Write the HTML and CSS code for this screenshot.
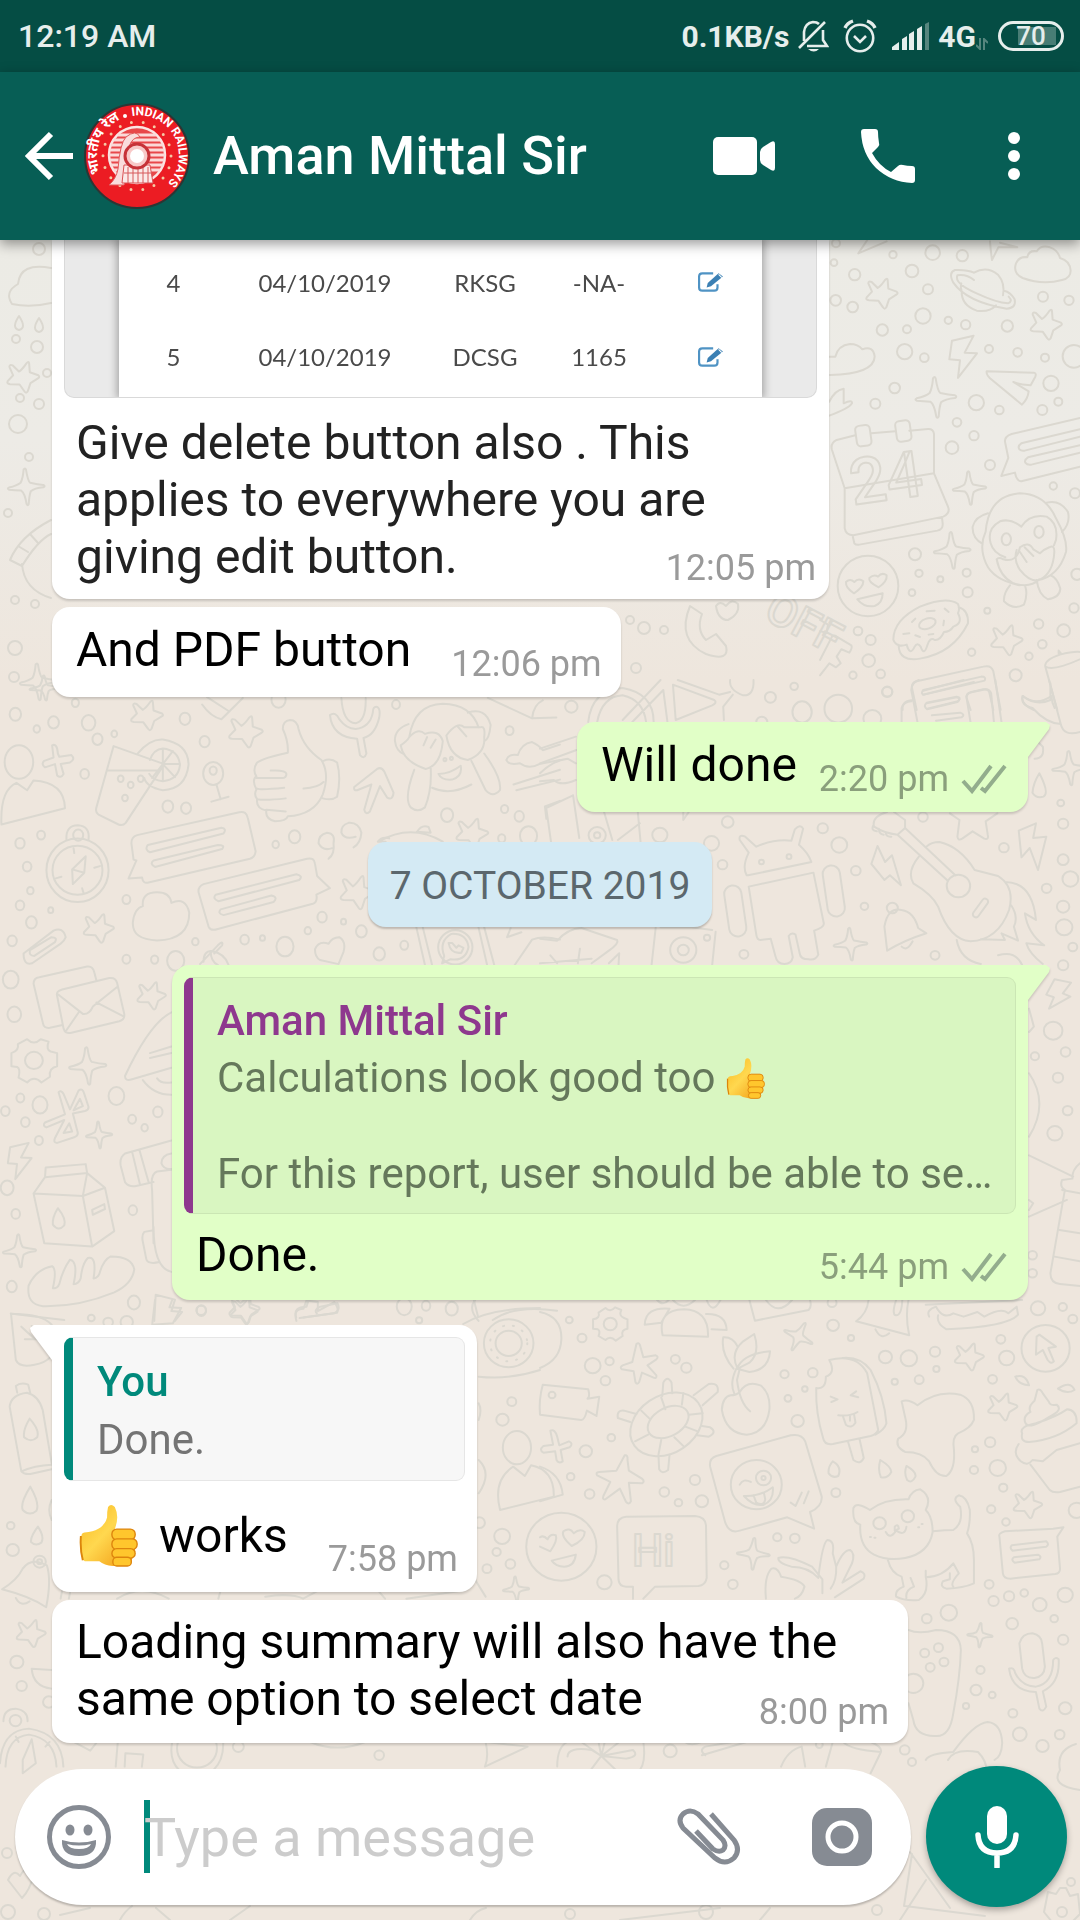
FILE: index.html
```
<!DOCTYPE html>
<html lang="en">
<head>
<meta charset="utf-8">
<meta name="viewport" content="width=device-width, initial-scale=1">
<title>Aman Mittal Sir</title>
<link rel="stylesheet" href="styles.css">
</head>
<body>
<svg class="defs" aria-hidden="true">
  <defs>
    <symbol id="ticks" viewBox="0 0 46 30">
      <path d="M2 17 L11 27 L30 2 M20 24 L24 27 L44 2" fill="none" stroke="#93ad8d" stroke-width="4"/>
    </symbol>
    <symbol id="edit" viewBox="0 0 24 20">
      <path d="M14 2H4Q1 2 1 5V15Q1 18 4 18H15Q18 18 18 15V12" fill="none" stroke="#4f93c4" stroke-width="2"/>
      <path d="M8 15l1-4L19 2l4 3L12 14z" fill="#3c80b4"/>
      <path d="M19 3l3 3" stroke="#fff" stroke-width="1"/>
    </symbol>
    <linearGradient id="skin" x1="0" y1="0" x2="1" y2="1">
      <stop offset="0" stop-color="#f9b71e"/><stop offset=".45" stop-color="#ffd84f"/><stop offset="1" stop-color="#f0930c"/>
    </linearGradient>
    <symbol id="thumb" viewBox="0 0 60 66">
      <path d="M2 32Q4 30 9 30Q25 27 28 15Q28 8 29 4Q32 0 36 4Q41 14 36 27L53 27Q58 30 56 36Q61 41 56 46Q59 51 54 56Q54 64 46 65H34Q25 64 20 60L5 60Q1 58 1 48Q0 38 2 32Z" fill="url(#skin)"/>
      <g fill="#ffc62d" stroke="#dd840d" stroke-width="1.4">
        <rect x="33" y="27" width="24" height="11" rx="5"/>
        <rect x="33" y="37" width="26" height="11" rx="5"/>
        <rect x="33" y="47" width="24" height="10" rx="5"/>
        <rect x="34" y="56" width="19" height="9" rx="4"/>
      </g>
      <path d="M1 34Q0 48 3 59" fill="none" stroke="#dc850b" stroke-width="2"/>
    </symbol>
    <g class="doodles">
      <path id="star" d="M-12 -16 Q-2 -22 10 -40 Q17 -48 18 -40 L20 -14 L45 -5 Q51 0 44 4 L22 18 L14 42 Q9 50 4 42 L-10 22 L-38 21 Q-49 20 -45 12 L-29 -5 L-40 -30 Q-40 -38 -30 -34Z"/>
      <path id="spark" d="M-8 -58 Q-3 -66 0 -58 Q6 -20 14 -14 Q40 -8 58 -7 Q66 -3 58 1 Q28 4 16 14 Q11 28 9 57 Q6 64 2 57 Q-4 20 -16 12 Q-36 10 -57 9 Q-64 5 -57 2 Q-30 -4 -18 -14 Q-10 -30 -8 -58Z"/>
      <path id="bolt" d="M-32 -45L33 -60L6 -9L43 -7L-14 67L-8 14L-40 11Z"/>
      <path id="cloud" d="M-60 34Q-90 20 -80 -10Q-70 -32 -46 -28Q-42 -50 -18 -46Q-5 -66 22 -58Q46 -50 52 -26Q82 -18 84 12Q84 34 58 40Q0 56 -60 34Z"/>
    </g>
  </defs>
</svg>

<div class="status-bar">
  <span class="clock">12:19 AM</span>
  <div class="status-icons">
    <span class="rate">0.1KB/s</span>
    <svg width="32" height="34" viewBox="0 0 32 34" fill="none" stroke="#e6eeec" stroke-width="2.6"><path d="M2 29L28 3M7 22V13Q8 4 16 3Q20 3 22 5M26 11V21L30 27H10"/><path d="M11 30h11q-5 5-11 0z" fill="#e6eeec" stroke="none"/></svg>
    <svg width="34" height="34" viewBox="0 0 34 34" fill="none" stroke="#e6eeec" stroke-width="2.6"><circle cx="17" cy="19" r="13.2"/><path d="M11 17l6 6 6-6"/><path d="M2 9Q4 4 10 2M32 9Q30 4 24 2" stroke-width="3.4"/></svg>
    <svg class="signal" width="40" height="28" viewBox="0 0 40 28" fill="#e6eeec"><path d="M1 28v-3l7-5v8zM11 28V17l5-3v14zM18 28V12l5-3v19zM26 28V7l5-3v24z"/><path d="M34 28V2l4-2v28z" fill="#56867e"/></svg>
    <span class="network">4G</span>
    <svg class="data" width="12" height="12" viewBox="0 0 12 12" fill="none" stroke="#56867e" stroke-width="2"><path d="M4 0v11L0 7M8 12V1l4 4"/></svg>
    <span class="battery">70</span>
  </div>
</div>

<header class="app-bar">
  <button class="icon-button back" aria-label="Back"><svg width="50" height="50" viewBox="0 0 50 50" fill="none" stroke="#fff" stroke-width="6"><path d="M49 25H6M27 3L5 25L27 47"/></svg></button>
  <svg class="avatar" width="106" height="106" viewBox="0 0 106 106" role="img" aria-label="Indian Railways">
    <circle cx="53" cy="53" r="52" fill="#ec1c23" stroke="#2c3635" stroke-width="2"/>
    <circle cx="53" cy="53" r="34" fill="none" stroke="#f5c9a4" stroke-width="3" stroke-linecap="round" stroke-dasharray="0 11.87"/>
    <circle cx="53" cy="52" r="28" fill="#e8474a" stroke="#fbe5e3" stroke-width="2.5"/>
    <path d="M34 32H72M30 37H76M27 42H79M26 47H80M25 52H81M26 57H80M27 62H79M30 67H76" stroke="#fbd9d8" stroke-width="3"/>
    <path d="M42 34Q52 26 56 34Q48 34 45 44Q43 58 45 70L40 82H25Q32 76 34 66Q36 40 42 34Z" fill="#f9dcdc" stroke="#e0585a"/>
    <path d="M40 62H66L69 80H38Z" fill="#fbe9e8" stroke="#d95154"/>
    <path d="M44 64V80M49 64V80M54 64V80M59 64V80M64 64V80M40 70H67" stroke="#d6585b"/>
    <circle cx="53" cy="53" r="12" fill="#f8c9c8" stroke="#c63238" stroke-width="3"/><circle cx="53" cy="53" r="7" fill="#fff"/>
    <path id="ring-right" d="M48 13A40 40 0 0 1 75 87" fill="none"/>
    <path id="ring-left" d="M17 70A40 40 0 0 1 48 13" fill="none"/>
    <text class="seal-en"><textPath href="#ring-right">INDIAN RAILWAYS</textPath></text>
    <text class="seal-hi"><textPath href="#ring-left">भारतीय रेल</textPath></text>
    <circle cx="41" cy="13" r="2" fill="#fff"/>
  </svg>
  <h1 class="title">Aman Mittal Sir</h1>
  <button class="icon-button" aria-label="Video call"><svg width="62" height="38" viewBox="0 0 62 38" fill="#fff"><rect width="44" height="38" rx="5"/><path d="M47 15Q47 12 50 10L58 5Q62 3 62 7V31Q62 35 58 33L50 28Q47 26 47 23z"/></svg></button>
  <button class="icon-button call" aria-label="Call"><svg width="54" height="54" viewBox="0 0 54 54" fill="#fff"><path d="M3 0H14Q17 0 17 3Q17 8 18 14Q19 16 17 18L11 24Q18 37 30 43L37 37Q39 35 42 36Q46 37 51 37Q54 37 54 40V51Q54 54 51 54Q30 53 15 39Q1 25 0 3Q0 0 3 0Z"/></svg></button>
  <button class="icon-button more" aria-label="More options"><svg width="12" height="48" viewBox="0 0 12 48" fill="#fff"><circle cx="6" cy="6" r="6"/><circle cx="6" cy="24" r="6"/><circle cx="6" cy="42" r="6"/></svg></button>
</header>

<main class="chat">
  <svg class="wallpaper" viewBox="0 240 1080 1680" preserveAspectRatio="xMidYMin slice" aria-hidden="true">
    <!-- right edge, upper part -->
    <g transform="translate(820 230) scale(.3333)">
      <circle cx="48" cy="40" r="12"/><circle cx="42" cy="98" r="10"/><circle cx="219" cy="74" r="11"/><circle cx="338" cy="68" r="22"/><circle cx="427" cy="77" r="17"/><circle cx="104" cy="134" r="17"/><circle cx="276" cy="123" r="19"/><circle cx="324" cy="178" r="15"/><circle cx="47" cy="211" r="16"/><circle cx="98" cy="231" r="16"/><circle cx="309" cy="258" r="23"/><circle cx="385" cy="271" r="11"/><circle cx="437" cy="284" r="14"/><circle cx="562" cy="288" r="17"/><circle cx="669" cy="200" r="15"/><circle cx="747" cy="211" r="14"/><circle cx="187" cy="300" r="17"/><circle cx="261" cy="298" r="12"/><circle cx="254" cy="365" r="23"/><circle cx="313" cy="383" r="13"/><circle cx="507" cy="357" r="12"/><circle cx="593" cy="367" r="13"/><circle cx="675" cy="383" r="12"/><circle cx="762" cy="379" r="34"/><circle cx="693" cy="460" r="23"/><circle cx="715" cy="515" r="12"/><circle cx="667" cy="540" r="15"/><circle cx="538" cy="540" r="13"/><circle cx="469" cy="518" r="23"/><circle cx="224" cy="474" r="16"/><circle cx="166" cy="521" r="15"/><circle cx="411" cy="577" r="13"/><circle cx="462" cy="617" r="14"/><circle cx="396" cy="653" r="19"/><circle cx="510" cy="705" r="15"/><circle cx="700" cy="768" r="11"/><circle cx="765" cy="790" r="15"/><circle cx="285" cy="973" r="18"/><circle cx="297" cy="1030" r="11"/><circle cx="440" cy="1028" r="12"/><circle cx="361" cy="1048" r="9"/><circle cx="276" cy="1088" r="10"/><circle cx="443" cy="1087" r="15"/><circle cx="502" cy="1142" r="9"/><circle cx="771" cy="1033" r="17"/><circle cx="762" cy="1134" r="14"/><circle cx="656" cy="1182" r="14"/><circle cx="731" cy="1202" r="19"/><circle cx="667" cy="1243" r="13"/><circle cx="627" cy="1279" r="11"/><circle cx="587" cy="1336" r="18"/><circle cx="455" cy="1267" r="11"/><circle cx="114" cy="1203" r="13"/><circle cx="152" cy="1230" r="15"/><circle cx="146" cy="1292" r="19"/><circle cx="182" cy="1332" r="13"/><circle cx="99" cy="1336" r="11"/><circle cx="202" cy="1385" r="15"/>
      <use href="#star" x="185" y="190"/><use href="#star" x="678" y="283"/><use href="#star" x="560" y="1230"/>
      <use href="#spark" x="347" y="503"/><use href="#spark" transform="translate(448 775) scale(.82)"/><use href="#spark" transform="translate(396 962) scale(.9)"/>
      <use href="#bolt" x="428" y="377"/>
      <use href="#cloud" x="668" y="110"/>
      <path d="M28 380H46Q54 346 90 342Q114 342 127 358Q160 346 164 380Q162 432 30 435M28 515Q44 480 71 476V520Q98 508 96 520Q86 536 28 557"/>
      <path d="M115 70L200 34M115 70L142 30M516 90L535 52L592 52L540 38M516 90Q512 60 510 34"/>
      <path d="M462 128Q500 106 534 134Q556 160 549 196M425 184Q424 226 470 242Q508 248 528 226M462 128Q440 118 405 120Q384 128 400 158Q440 216 560 236Q590 234 584 208Q572 186 552 182M462 150Q440 132 412 136Q402 160 470 190Q530 218 564 220Q580 214 566 200M425 184Q420 172 424 160"/>
      <path d="M500 424L642 428Q650 430 646 440L632 466Q600 464 580 456L626 484Q624 506 606 524L510 445Q498 432 500 424Z"/>
      <path d="M106 616L50 630Q30 640 36 660L74 775L342 730V612Q340 596 324 597L268 602M154 610L226 604M74 775V895Q78 916 100 916L370 860Q392 850 384 830L342 730M98 918L103 940Q108 946 118 944L352 902Q370 898 368 880L366 862"/>
      <rect x="108" y="586" width="44" height="62" rx="12" transform="rotate(-8 130 617)"/><rect x="228" y="572" width="44" height="62" rx="12" transform="rotate(-8 250 603)"/>
      <path d="M780 564L575 612Q550 620 556 640L565 684L544 738L585 728Q590 754 604 754L780 710M780 598L604 640Q592 648 598 658Q604 664 614 662L780 620M780 646L624 682Q612 690 616 698Q622 706 634 704L780 668"/>
      <path d="M497 905Q506 796 600 790Q676 792 708 865Q744 930 738 966Q716 1040 650 1052M497 905Q476 950 498 1000Q520 1050 600 1066M604 890Q572 864 540 874Q500 896 512 940Q520 970 556 982M604 890Q630 850 680 860Q716 880 708 930L702 946M680 818Q720 808 744 846Q752 880 726 906M504 850Q466 860 458 890Q456 924 488 942M530 988Q536 980 550 988Q590 1000 600 952Q626 932 640 958L660 970Q672 958 688 952Q704 944 703 966Q700 1030 658 1050Q630 1058 600 1020Q580 990 590 960M530 988Q540 1040 580 1060Q630 1076 658 1048M600 966L620 996M614 952L640 978M570 1066Q550 1090 552 1114Q580 1142 612 1124Q624 1094 616 1070M650 1050Q656 1096 684 1108Q720 1102 721 1076Q712 1044 692 1036"/>
      <ellipse cx="559" cy="928" rx="14" ry="18"/><ellipse cx="657" cy="906" rx="14" ry="18"/>
      <circle cx="144" cy="1068" r="91"/><path d="M102 1090Q76 1074 78 1056Q90 1044 103 1056Q116 1042 130 1054Q130 1072 102 1090ZM176 1072Q144 1056 148 1044Q162 1032 174 1040Q186 1026 200 1036Q202 1054 176 1072ZM112 1108L188 1090Q188 1120 164 1128Q134 1134 112 1108Z"/>
      <path d="M220 1230Q220 1170 300 1130Q380 1098 414 1122Q420 1138 414 1150Q430 1180 400 1190Q390 1206 372 1206Q360 1232 344 1230Q330 1220 322 1246Q312 1280 302 1250Q292 1236 284 1250Q270 1280 260 1244Q230 1254 220 1230ZM236 1244Q236 1296 300 1286Q400 1270 444 1180Q446 1140 416 1132M320 1144L344 1142M374 1136L386 1146M276 1176L286 1166M372 1172L370 1186M326 1214L340 1212M286 1216L300 1221M250 1212L268 1210"/><ellipse cx="322" cy="1181" rx="26" ry="15" transform="rotate(-20 322 1181)"/>
      <path d="M290 1440L276 1374Q274 1358 290 1354L490 1310Q514 1304 520 1324L542 1440M310 1380L484 1340Q500 1340 494 1352L312 1394Q300 1392 310 1380ZM320 1418L410 1400Q426 1402 414 1414L322 1436M452 1440L440 1404Q438 1390 454 1386L490 1378Q506 1376 508 1388L520 1440M284 1410Q244 1410 248 1440"/>
      <path d="M676 1310Q672 1290 720 1274Q760 1264 780 1266M676 1310Q700 1324 780 1288M676 1310L712 1440M716 1270V1262L724 1272M608 1398Q650 1430 694 1398Q696 1420 704 1434M608 1398Q600 1420 640 1440"/>
      <path d="M0 1290L36 1220Q42 1214 50 1220L94 1246Q98 1254 88 1268L64 1258L50 1280L62 1300L48 1312L28 1300L0 1336M0 1170L24 1184L20 1208L0 1204"/>
    </g>
    <text class="doodle-text" x="853" y="505" transform="rotate(-8 853 505)" font-size="64">24</text>
    <text class="doodle-text" x="762" y="618" transform="rotate(28 762 618)" font-size="44">OFF</text>
    <!-- left edge, upper part -->
    <g>
      <path d="M51 268Q20 262 18 284Q4 292 12 304Q30 308 51 303M19 316q-8 12 0 14q8-2 0-14zM39 318q-8 12 0 14q8-2 0-14z"/>
      <circle cx="39" cy="249" r="6"/><circle cx="16" cy="339" r="4"/><circle cx="37" cy="347" r="6"/><circle cx="47" cy="373" r="4"/><circle cx="20" cy="398" r="4"/><circle cx="39" cy="404" r="5"/><circle cx="18" cy="424" r="9"/><circle cx="29" cy="457" r="4"/><circle cx="8" cy="513" r="4"/><circle cx="15" cy="600" r="4"/><circle cx="35" cy="604" r="4"/><circle cx="15" cy="648" r="7"/><circle cx="14" cy="677" r="5"/>
      <use href="#star" transform="translate(23 377) scale(.34)"/><use href="#spark" transform="translate(26 487) scale(.3)"/><use href="#spark" transform="translate(38 682) scale(.3)"/>
      <path d="M51 520Q20 536 10 560L22 566Q38 540 51 534M22 564Q24 590 51 598M18 546l10 6M30 534l8 9"/>
      <path d="M690 606Q676 640 706 654Q730 662 726 646L716 634L706 640Q696 630 702 614ZM716 606q2 14 12 14q12-6 10-16q-6-6-12 2q-6-6-10 0z"/>
      <circle cx="630" cy="620" r="4"/><circle cx="644" cy="628" r="6"/><circle cx="664" cy="630" r="4"/><circle cx="636" cy="668" r="5"/>
    </g>
    <!-- right half, middle -->
    <g transform="translate(540 680) scale(.3444 .3333)">
      <circle cx="91" cy="80" r="18"/><circle cx="669" cy="52" r="16"/><circle cx="738" cy="19" r="11"/><circle cx="1008" cy="36" r="15"/><circle cx="965" cy="116" r="26"/><circle cx="644" cy="126" r="16"/><circle cx="1512" cy="369" r="10"/><circle cx="1519" cy="431" r="15"/><circle cx="545" cy="426" r="17"/><circle cx="348" cy="465" r="22"/><circle cx="166" cy="466" r="25"/><circle cx="166" cy="466" r="9"/><circle cx="498" cy="490" r="22"/><circle cx="821" cy="445" r="15"/><circle cx="869" cy="495" r="23"/><circle cx="530" cy="554" r="14"/><circle cx="917" cy="572" r="14"/><circle cx="1347" cy="503" r="14"/><circle cx="1519" cy="539" r="16"/><circle cx="1540" cy="597" r="23"/><circle cx="1471" cy="625" r="14"/><circle cx="1519" cy="680" r="18"/><circle cx="1522" cy="742" r="24"/><circle cx="942" cy="679" r="11"/><circle cx="1547" cy="801" r="13"/><circle cx="1519" cy="856" r="15"/><circle cx="1147" cy="826" r="13"/><circle cx="592" cy="823" r="13"/><circle cx="1112" cy="411" r="14"/><circle cx="485" cy="773" r="9"/><circle cx="1490" cy="1052" r="27"/><circle cx="1526" cy="1116" r="14"/><circle cx="1437" cy="1129" r="12"/><circle cx="1504" cy="1193" r="15"/><circle cx="1532" cy="1292" r="14"/><circle cx="1495" cy="1360" r="22"/><circle cx="1430" cy="1726" r="13"/><circle cx="1430" cy="1780" r="13"/>
      <path d="M140 126Q150 30 240 24Q330 40 330 126M166 126Q180 50 240 46Q300 60 308 126M240 120L350 0M268 126L358 30L370 126M386 14L394 120L500 76Q516 68 506 60L386 14M400 0L520 44L552 36M552 0Q548 30 590 46Q622 48 620 0M560 44L532 80L534 120"/>
      <ellipse cx="761" cy="96" rx="28" ry="32"/><ellipse cx="866" cy="86" rx="40" ry="42"/>
      <path d="M1096 126L1078 30Q1078 8 1100 0M1322 0L1340 126M1112 32L1230 0M1112 44L1260 6M1122 70L1210 52Q1224 56 1212 66L1124 88Q1112 78 1122 70ZM1138 106L1220 98Q1236 104 1224 112L1150 122M1250 126L1238 50Q1240 38 1256 36L1294 28Q1306 28 1310 40L1318 126M1050 126V84Q1056 66 1078 64M1402 48Q1440 80 1482 60V10M1402 48Q1394 76 1430 84Q1470 130 1512 132L1478 0M1512 132Q1520 170 1568 156"/>
      <use href="#spark" transform="translate(1538 265) scale(.84)"/><use href="#spark" transform="translate(901 793) scale(.8)"/>
      <path d="M1450 280Q1480 340 1462 350Q1440 356 1430 338Q1432 310 1450 280ZM1436 236Q1466 236 1460 200L1446 186M0 206L104 170M0 250L106 210M0 280Q40 240 80 236L104 250M0 304L40 300Q60 320 104 300M18 384L96 346M18 384L32 486M96 346L114 474M186 396L210 480M284 396L292 486M226 480L290 430M416 396V420L432 396"/>
      <path d="M600 586Q586 560 606 518L580 480Q576 462 596 470L628 500Q680 476 730 482L740 448Q756 430 764 446L752 494Q780 520 788 546L604 586ZM606 620L794 578L824 730Q826 742 796 752L808 824Q800 842 780 838Q756 838 754 820L742 764Q730 756 722 768L734 832Q730 852 710 852Q688 852 684 830L670 776L640 780Q630 780 628 764Z"/>
      <circle cx="643" cy="546" r="7"/><circle cx="723" cy="530" r="7"/><rect x="542" y="616" width="50" height="154" rx="25" transform="rotate(-8 567 693)"/><rect x="828" y="556" width="50" height="154" rx="25" transform="rotate(-8 853 633)"/>
      <path d="M980 498L1002 546L1022 526L1048 616L1016 586L1000 600L962 552Z"/>
      <path d="M1038 464L1184 602M1060 444L1206 586M1008 396Q962 410 970 440Q1000 460 1038 464L1060 444V420L1028 396M1100 530Q1064 576 1084 610Q1140 644 1156 680Q1190 780 1250 784Q1330 780 1362 690Q1380 620 1330 588L1262 570Q1220 500 1160 486Q1136 486 1122 500M1350 606Q1430 606 1440 720L1408 700Q1416 760 1464 796L1412 790Q1420 820 1460 852M1368 676Q1390 710 1376 740L1388 782L1340 760L1350 780L1280 778M1210 780Q1220 840 1280 852M1330 826Q1380 810 1400 855M968 436q-8 16 10 18M984 446q0 16 14 18M1004 456q0 16 16 14"/>
      <circle cx="1215" cy="618" r="34"/><rect x="1270" y="652" width="18" height="64" rx="9" transform="rotate(35 1279 684)"/>
      <path d="M1190 400L1218 420L1212 470Q1214 484 1226 476L1256 454L1290 476Q1304 480 1300 464L1294 424L1328 400M1440 430L1390 452L1398 532L1422 504L1446 570L1470 470L1432 474Z"/>
      <path d="M1008 812L1000 740Q1010 680 1050 690Q1086 696 1098 744L1122 760Q1060 780 1008 812ZM1050 800Q1066 816 1082 784"/><circle cx="1023" cy="684" r="16"/>
      <path d="M0 776L50 782Q80 746 120 744L224 780Q230 790 200 812L150 850M116 806L110 850M0 850L150 836M336 742L324 855M510 755L500 855M350 742H440L500 750M30 826L50 850M230 820L228 855M200 850L230 820"/><circle cx="416" cy="810" r="38"/><circle cx="416" cy="810" r="16"/>
      <path d="M1494 898L1542 908L1518 940L1540 950L1478 986L1492 952L1470 944ZM1420 986L1434 1040L1420 1056M1420 1180Q1480 1270 1420 1370M1420 1426L1548 1490M1420 1610L1530 1560M1568 1450Q1544 1470 1546 1496L1516 1500Q1508 1520 1524 1530L1482 1780Q1482 1810 1510 1812L1568 1818M1516 1530L1568 1540M1508 1650L1568 1660M1494 1730L1568 1744M1420 1560L1432 1570L1420 1590"/>
    </g>
    <!-- left half, middle -->
    <g transform="translate(0 680) scale(.3571 .4082)">
      <circle cx="43" cy="84" r="16"/><circle cx="150" cy="104" r="15"/><circle cx="103" cy="120" r="9"/><circle cx="248" cy="105" r="19"/><circle cx="211" cy="56" r="10"/><circle cx="273" cy="145" r="14"/><circle cx="320" cy="132" r="8"/><circle cx="518" cy="95" r="15"/><circle cx="573" cy="151" r="14"/><circle cx="237" cy="230" r="12"/><circle cx="470" cy="310" r="15"/><circle cx="521" cy="314" r="14"/><circle cx="780" cy="48" r="20"/><circle cx="1109" cy="60" r="11"/><circle cx="1427" cy="124" r="11"/><circle cx="1252" cy="331" r="17"/><circle cx="1413" cy="316" r="10"/><circle cx="1454" cy="334" r="13"/><circle cx="1480" cy="382" r="24"/><circle cx="1405" cy="388" r="10"/><circle cx="825" cy="384" r="16"/><circle cx="772" cy="403" r="9"/><circle cx="56" cy="400" r="13"/><circle cx="115" cy="380" r="11"/><circle cx="76" cy="457" r="12"/><circle cx="85" cy="516" r="9"/><circle cx="56" cy="552" r="12"/><circle cx="142" cy="564" r="7"/><circle cx="88" cy="594" r="15"/><circle cx="34" cy="639" r="13"/><circle cx="354" cy="538" r="11"/><circle cx="354" cy="684" r="11"/><circle cx="547" cy="641" r="9"/><circle cx="433" cy="685" r="10"/><circle cx="492" cy="688" r="24"/><circle cx="685" cy="636" r="12"/><circle cx="735" cy="632" r="7"/><circle cx="798" cy="653" r="24"/><circle cx="902" cy="581" r="13"/><circle cx="862" cy="614" r="9"/><circle cx="1012" cy="616" r="15"/><circle cx="962" cy="592" r="7"/><circle cx="1062" cy="671" r="16"/><circle cx="1132" cy="650" r="11"/><circle cx="30" cy="734" r="22"/><circle cx="40" cy="819" r="19"/><circle cx="112" cy="1041" r="21"/><circle cx="326" cy="1019" r="22"/><circle cx="57" cy="1024" r="11"/><circle cx="15" cy="1056" r="12"/><circle cx="71" cy="1083" r="12"/><circle cx="109" cy="1128" r="11"/><circle cx="370" cy="1076" r="11"/><circle cx="405" cy="1097" r="9"/><circle cx="442" cy="1058" r="13"/><circle cx="20" cy="1244" r="18"/><circle cx="44" cy="1308" r="12"/><circle cx="372" cy="1299" r="12"/><circle cx="33" cy="1486" r="14"/><circle cx="375" cy="1525" r="17"/><circle cx="564" cy="1545" r="13"/><circle cx="1132" cy="1535" r="21"/><circle cx="1193" cy="1533" r="12"/><circle cx="1265" cy="1540" r="17"/>
      <use href="#star" transform="translate(411 86) scale(.95 .8)"/><use href="#star" transform="translate(688 126) scale(1 .85)"/><use href="#star" transform="translate(276 608) scale(.9 .78)"/><use href="#star" transform="translate(424 773) scale(.85 .74)"/><use href="#star" transform="translate(1322 375) scale(.95 .8)"/><use href="#star" transform="translate(1000 520) scale(1 .9)"/><use href="#star" transform="translate(684 1540) scale(.9 .8)"/>
      <use href="#spark" transform="translate(245 946) scale(.85 .75)"/><use href="#spark" transform="translate(277 1115) scale(.6 .54)"/><use href="#spark" transform="translate(54 1399) scale(.76 .66)"/><use href="#spark" transform="translate(125 20) scale(.7 .5)"/><use href="#bolt" transform="translate(54 1176) scale(.8 .7)"/>
      <ellipse cx="53" cy="201" rx="40" ry="41"/><path d="M4 354L182 314Q180 250 94 246L76 270L46 252Q0 270 4 354ZM146 160Q160 154 162 180L166 188L200 184Q212 194 196 202L170 206L178 230Q170 242 160 234L154 206L126 214Q114 206 124 198L150 190Z"/>
      <path d="M318 162L460 206L352 350Q344 358 332 354L276 330Q266 324 270 312ZM302 222H442M386 180Q420 144 456 146Q528 156 528 208Q520 268 456 270Q410 262 404 240M420 196Q430 170 456 168Q500 172 504 208Q500 244 456 248Q428 246 418 230M456 206V170M456 206L484 174M456 206H504M456 206L490 238M456 206V246M456 206L426 240"/><circle cx="338" cy="242" r="8"/><circle cx="394" cy="242" r="8"/><circle cx="366" cy="257" r="8"/><circle cx="350" cy="289" r="8"/>
      <circle cx="597" cy="229" r="28"/><circle cx="597" cy="222" r="10"/><path d="M606 256L618 292M592 298L640 286M566 60Q590 90 620 96L680 44M580 42L640 76"/>
      <path d="M806 178Q808 150 792 120Q792 100 812 98Q832 98 836 120Q850 166 900 196Q924 230 904 280Q880 330 806 334Q802 346 770 346Q742 340 746 320Q716 314 720 292Q710 280 718 268Q704 244 718 236Q706 220 720 202Q740 190 806 178ZM758 222Q800 220 802 230Q802 240 790 240H718M720 266Q730 270 796 264M720 292Q740 296 800 290M746 318L800 322M850 266Q890 264 906 250M906 198Q926 190 944 202Q956 240 944 286Q930 296 904 290"/>
      <path d="M924 86Q940 76 950 96Q970 120 996 120Q1036 116 1044 80Q1044 64 1056 66Q1066 70 1062 92Q1050 136 1018 142L1026 180Q1020 196 1008 184L1000 144Q930 140 924 86ZM956 44Q960 104 996 106Q1026 100 1024 44M992 262L1056 218Q1068 212 1076 224L1102 276Q1100 296 1084 288L1064 260L1036 322Q1024 332 1020 318L1040 256L1000 270Q990 272 992 262Z"/>
      <path d="M1146 140Q1160 60 1240 58Q1320 60 1340 116M1122 160Q1140 150 1146 140Q1170 116 1190 132Q1230 120 1240 150Q1234 210 1192 218Q1130 200 1122 160ZM1250 136Q1280 100 1300 116L1344 116Q1360 110 1356 140Q1360 180 1310 196Q1260 190 1250 136ZM1144 108Q1104 120 1106 150Q1110 176 1132 182M1310 80Q1360 66 1374 110Q1370 146 1356 150M1160 220Q1130 290 1150 312Q1170 326 1190 312Q1210 270 1206 214M1320 198L1360 270Q1380 290 1400 270Q1406 240 1356 180M1210 264Q1260 284 1320 256M1228 230Q1260 230 1290 210Q1296 236 1266 244Q1236 246 1228 230ZM1186 160L1196 140M1206 166L1220 146M1280 112L1306 138"/><circle cx="1246" cy="195" r="4"/><circle cx="1264" cy="192" r="4"/>
      <path d="M1366 44L1490 94L1558 92M1490 94Q1494 60 1520 50M1418 196Q1424 180 1450 184Q1460 156 1490 152Q1510 160 1520 172L1568 158M1418 196Q1424 210 1456 204Q1480 220 1510 206L1568 196M1438 256L1568 220M1446 270L1568 244M1530 340L1526 310L1568 296"/>
      <path d="M374 440L368 400Q368 384 384 380L670 324Q690 320 694 338L716 420Q714 434 700 438L416 496Q400 500 398 484L360 486L382 442ZM414 404L620 362Q636 364 626 376L420 422Q404 416 414 404ZM430 442L610 404Q632 404 622 414L434 458Q418 450 430 442ZM556 520Q554 506 570 500L860 438Q880 434 882 450L888 480L924 510L886 526Q890 544 876 548L610 610Q590 616 584 604ZM604 526L830 476Q850 480 838 490L612 542Q594 536 604 526ZM618 562L760 528Q780 532 766 544L626 576Q608 572 618 562Z"/>
      <ellipse cx="217" cy="466" rx="87" ry="78"/><ellipse cx="217" cy="466" rx="70" ry="60"/><path d="M186 390Q184 356 218 356Q252 358 248 390M240 432L202 464L204 500L236 472ZM202 464L236 472M206 412L208 424M280 456L264 460M230 510L234 522M156 486L172 482"/><circle cx="219" cy="380" r="14"/>
      <path d="M920 438Q938 426 934 400Q940 376 916 374Q892 378 892 400Q904 420 930 412M990 410Q1010 400 1012 374Q1004 348 976 350Q954 356 956 374Q964 392 996 384M1168 372Q1180 354 1200 360L1206 374ZM1060 396Q1150 350 1240 396M1080 396H1058Q1070 382 1090 388"/>
      <path d="M400 554Q396 520 440 520Q476 520 480 546Q520 530 530 570Q530 636 440 638Q370 636 372 594Q376 560 400 554ZM66 670L150 614Q176 604 184 630Q180 640 170 646L90 694Q66 700 66 670ZM84 662L144 630Q162 630 154 642L96 676Q80 676 84 662ZM882 660Q892 638 920 646Q930 630 950 630Q970 640 962 666L948 696L896 686Q882 678 882 660ZM560 696L610 650Q626 636 622 650L600 670M570 690Q570 664 592 664Q630 670 640 698M590 664Q590 690 610 698"/>
      <path d="M1166 606L1190 698M1184 606L1210 698M1340 606L1364 698M1356 606L1384 698M1440 700L1490 636Q1520 626 1568 636M1420 630L1430 608M1420 630L1460 618"/><ellipse cx="1275" cy="655" rx="48" ry="42"/><path d="M1238 694L1244 676Q1228 640 1264 622Q1306 620 1312 654Q1304 690 1262 684ZM1256 644Q1262 672 1292 668L1298 656L1284 650L1278 656L1266 644Z"/>
      <path d="M94 744Q94 730 110 728L244 702Q260 700 264 716L270 736M94 744L120 840Q122 854 140 852L172 846M160 774Q156 762 174 758L306 730Q324 728 328 742L348 818Q350 832 334 836L200 864Q182 868 178 854ZM162 770L232 818Q250 820 260 800L328 752M186 858L222 812M346 824L270 790"/>
      <ellipse cx="95" cy="932" rx="25" ry="21"/><path d="M76 880Q95 896 114 880L136 886Q128 906 142 910L160 914V946Q136 950 140 972L116 986Q95 968 76 986L52 974Q58 952 48 948L32 946V914Q54 908 50 892Z"/>
      <path d="M480 814Q420 840 350 970Q350 984 370 978L480 950M420 914L480 898M420 926L480 914M400 980Q430 1016 480 1016M440 976Q450 990 480 986"/>
      <path d="M164 1010Q172 1004 178 1014L196 1052L220 1006Q232 998 236 1014L248 1046Q248 1054 238 1056L204 1062L218 1110Q218 1118 208 1120L160 1134Q148 1134 154 1122L180 1078L130 1096Q118 1092 126 1084L182 1064ZM206 1054L224 1026L232 1044ZM178 1110L194 1086L202 1106Z"/>
      <path d="M128 1194L240 1186L244 1208L126 1218ZM126 1218L94 1258L124 1380L258 1388L320 1350L294 1244L244 1208L232 1264L94 1258M232 1264L258 1388M232 1264L294 1244M162 1294Q186 1320 180 1336Q164 1352 148 1334Q146 1316 162 1294ZM258 1298L292 1284L294 1296L260 1310Z"/>
      <path d="M80 1484Q100 1444 146 1436Q160 1444 148 1490Q160 1492 166 1480Q176 1444 196 1420Q220 1424 206 1480Q220 1480 226 1466Q230 1430 246 1416Q272 1410 262 1466Q276 1464 280 1450Q290 1420 310 1412Q370 1412 376 1444Q370 1480 320 1500Q220 1536 120 1534Q74 1530 80 1484Z"/>
      <path d="M480 1128L350 1160Q334 1170 338 1190L350 1230Q360 1242 378 1240L430 1230M370 1156L392 1236M390 1150L416 1230M480 1160Q452 1164 452 1184Q458 1200 480 1198M480 1200L440 1204Q420 1210 426 1250L430 1380M480 1450Q430 1440 430 1340M430 1348L404 1352Q396 1360 400 1376L410 1420Q416 1432 446 1426"/>
      <path d="M432 1570L436 1506L490 1518L480 1546L510 1548L490 1570M830 1570Q820 1540 850 1540L858 1520L890 1524V1546L936 1524Q950 1540 944 1550L850 1562M1340 1570Q1310 1540 1330 1520M1380 1568Q1440 1530 1560 1545M30 1552Q100 1560 180 1568"/>
    </g>
    <!-- left edge, lower part -->
    <g transform="translate(0 1300) scale(.3444 .3333)">
      <circle cx="265" cy="54" r="10"/><circle cx="314" cy="67" r="14"/><circle cx="368" cy="66" r="18"/><circle cx="584" cy="31" r="14"/><circle cx="1217" cy="61" r="9"/><circle cx="1486" cy="305" r="13"/><circle cx="1459" cy="359" r="18"/><circle cx="1458" cy="709" r="23"/><circle cx="1442" cy="756" r="12"/><circle cx="1414" cy="806" r="13"/><circle cx="1482" cy="792" r="14"/><circle cx="1392" cy="668" r="16"/><circle cx="31" cy="677" r="11"/><circle cx="37" cy="750" r="18"/><circle cx="49" cy="1086" r="19"/><circle cx="63" cy="1158" r="15"/><circle cx="142" cy="1206" r="17"/><circle cx="692" cy="1340" r="16"/><circle cx="1101" cy="1366" r="14"/><circle cx="45" cy="1262" r="17"/>
      <path d="M32 42Q120 40 150 74M32 42L46 180Q56 204 100 194Q130 190 148 170M62 80L100 116M92 78L110 120M72 118H110M28 320Q32 284 78 278Q112 286 124 330L150 490M28 320L62 514Q70 524 88 522L150 508M50 278L46 258Q60 246 82 254L88 280M62 514Q100 496 150 494M86 356Q116 390 108 412Q90 430 70 412Q66 390 86 356ZM88 560Q116 610 106 632Q86 650 66 630Q58 610 88 560ZM110 680Q130 710 120 728Q104 740 90 726Q88 710 110 680ZM150 600Q136 630 150 660"/>
      <path d="M6 868Q50 840 66 806Q90 770 136 796Q150 840 134 922Q90 890 6 868ZM46 894Q60 922 86 904"/><circle cx="115" cy="785" r="18"/><circle cx="115" cy="785" r="7"/>
      <use href="#star" transform="translate(90 1000) scale(.9)"/><path d="M150 1110L92 1106Q96 1160 150 1166M10 1264Q10 1226 46 1226Q82 1232 80 1264M0 1390Q6 1290 84 1286Q180 1300 184 1400M16 1400Q20 1310 84 1304Q160 1316 164 1400M92 1318L66 1380V1420L104 1390ZM46 1310L54 1326M144 1326L132 1340M214 1326L262 1352L282 1326M342 1326L336 1400M362 1400L364 1360L416 1364L412 1400M500 1326Q490 1380 520 1410M648 1326Q650 1380 620 1410M900 1326Q980 1360 1060 1326M1410 1326Q1420 1370 1408 1400L1532 1340L1410 1326"/>
      <circle cx="572" cy="1345" r="58"/><circle cx="1477" cy="130" r="72"/><circle cx="1477" cy="130" r="38"/><circle cx="1477" cy="130" r="54" stroke-dasharray="1 9"/>
      <path d="M1390 230Q1480 240 1568 210M1345 72Q1420 24 1568 24M1376 0L1388 50M442 74L450 0M442 74L502 70L526 24L492 22L500 0M860 52Q850 20 890 20L896 0M870 54L970 40Q990 30 980 10L930 20Q910 30 920 40"/><use href="#star" transform="translate(708 34) scale(.84)"/><use href="#spark" transform="translate(1498 868) scale(.62)"/>
      <ellipse cx="1501" cy="443" rx="41" ry="50"/><path d="M1452 630Q1430 540 1490 500L1524 528L1542 496Q1610 510 1608 590L1452 630M1390 310Q1400 330 1390 360M1390 480Q1430 520 1390 580M1380 840L1410 890M340 896Q410 850 490 896M640 874L634 896M880 896L920 874M770 890Q850 880 880 896M1180 896L1330 874M180 874L176 896M204 874L200 896M1100 874L1118 896"/>
    </g>
    <!-- right half, lower part -->
    <g transform="translate(540 1300) scale(.3444 .3333)">
      <circle cx="85" cy="60" r="10"/><circle cx="122" cy="114" r="13"/><circle cx="153" cy="197" r="23"/><circle cx="202" cy="184" r="12"/><circle cx="190" cy="242" r="14"/><circle cx="393" cy="178" r="13"/><circle cx="425" cy="203" r="15"/><circle cx="851" cy="76" r="17"/><circle cx="903" cy="114" r="9"/><circle cx="848" cy="8" r="13"/><circle cx="710" cy="223" r="12"/><circle cx="792" cy="218" r="14"/><circle cx="769" cy="267" r="8"/><circle cx="720" cy="295" r="10"/><circle cx="748" cy="363" r="18"/><circle cx="1003" cy="171" r="19"/><circle cx="1071" cy="175" r="24"/><circle cx="1147" cy="155" r="15"/><circle cx="1151" cy="207" r="9"/><circle cx="1101" cy="239" r="13"/><circle cx="1030" cy="245" r="9"/><circle cx="1355" cy="174" r="22"/><circle cx="1338" cy="118" r="13"/><circle cx="1314" cy="238" r="13"/><circle cx="1446" cy="25" r="21"/><circle cx="1518" cy="21" r="12"/><circle cx="1547" cy="57" r="13"/><circle cx="1307" cy="427" r="15"/><circle cx="1263" cy="448" r="9"/><circle cx="1329" cy="504" r="24"/><circle cx="1260" cy="510" r="12"/><circle cx="1345" cy="563" r="12"/><circle cx="1310" cy="628" r="12"/><circle cx="1353" cy="666" r="11"/><circle cx="1558" cy="631" r="23"/><circle cx="133" cy="454" r="18"/><circle cx="207" cy="413" r="11"/><circle cx="89" cy="530" r="11"/><circle cx="144" cy="582" r="14"/><circle cx="450" cy="540" r="15"/><circle cx="361" cy="576" r="14"/><circle cx="402" cy="608" r="11"/><circle cx="470" cy="604" r="18"/><circle cx="859" cy="578" r="13"/><circle cx="689" cy="712" r="12"/><circle cx="740" cy="715" r="14"/><circle cx="187" cy="847" r="21"/><circle cx="535" cy="796" r="12"/><circle cx="560" cy="853" r="14"/><circle cx="1187" cy="938" r="24"/><circle cx="1123" cy="956" r="14"/><circle cx="1304" cy="853" r="13"/><circle cx="1317" cy="903" r="15"/><circle cx="1362" cy="889" r="15"/><circle cx="1406" cy="879" r="11"/><circle cx="1525" cy="885" r="22"/><circle cx="1451" cy="914" r="20"/><circle cx="1493" cy="956" r="11"/><circle cx="1371" cy="971" r="17"/><circle cx="1519" cy="1019" r="15"/><circle cx="1117" cy="1059" r="13"/><circle cx="1157" cy="1043" r="13"/><circle cx="1173" cy="1086" r="13"/><circle cx="1133" cy="1102" r="13"/><circle cx="1084" cy="1150" r="29"/><circle cx="1279" cy="1110" r="12"/><circle cx="1266" cy="1170" r="16"/><circle cx="1313" cy="1185" r="10"/><circle cx="1237" cy="1218" r="9"/><circle cx="1373" cy="1240" r="13"/><circle cx="1393" cy="1303" r="20"/><circle cx="1459" cy="1338" r="18"/><circle cx="1509" cy="1304" r="14"/><circle cx="1525" cy="1225" r="18"/><circle cx="1059" cy="1350" r="14"/><circle cx="378" cy="1353" r="19"/><circle cx="811" cy="1334" r="10"/>
      <use href="#star" transform="translate(1246 170) scale(.9)"/><use href="#star" transform="translate(1343 320) scale(.9)"/><use href="#star" transform="translate(1416 614) scale(.88)"/><use href="#spark" transform="translate(750 110) rotate(30) scale(.74)"/><use href="#spark" transform="translate(619 762) rotate(8) scale(.78)"/><use href="#spark" transform="translate(1277 1006) rotate(8) scale(.6)"/>
      <path d="M280 132Q286 126 290 134L300 172L336 166Q346 170 338 178L312 196L338 226Q340 238 328 232L296 218L288 246Q282 256 277 246L272 214L238 208Q230 202 240 196L268 186ZM246 466Q256 464 254 480L258 512L296 536Q306 544 296 550L258 548L264 604Q258 616 250 606L232 566L190 598Q180 600 184 588L204 546L166 526Q160 518 172 516L222 512Z"/>
      <circle cx="204" cy="72" r="19"/><path d="M190 24Q204 38 218 22L236 30Q228 48 244 54L254 58V86Q234 90 240 108L220 122Q204 106 190 120L170 108Q176 92 168 88L154 86V58Q176 54 170 38Z"/>
      <path d="M0 36Q64 50 62 118Q60 180 0 204M304 74Q306 20 376 26L352 68ZM356 106Q340 30 418 28Q490 30 488 110ZM482 42Q540 40 542 90L498 88M340 0Q356 20 374 0M386 0Q416 34 450 0M484 0Q500 46 524 0M608 0L624 62L780 30Q790 20 784 0M656 0Q690 50 732 0"/>
      <path d="M954 0Q950 40 918 64L1072 106Q1060 50 1070 0M974 88Q990 122 1014 100M1034 0Q1020 44 1034 46Q1050 46 1052 0M1120 14L1400 0M1130 50Q1120 30 1150 20Q1170 60 1200 40L1230 50L1270 36L1290 50Q1340 20 1360 40L1384 20L1388 44Q1360 80 1180 88Q1150 70 1156 46"/>
      <circle cx="1468" cy="145" r="70"/><path d="M1450 104L1498 140L1476 144L1492 184Q1484 194 1474 180L1460 150L1440 164L1442 110Z"/>
      <path d="M8 254L140 268Q146 290 138 296L172 290L164 348L136 332Q130 360 120 360L0 344Q-4 300 8 254Z"/><circle cx="35" cy="285" r="10"/>
      <ellipse cx="372" cy="366" rx="64" ry="42" transform="rotate(-30 372 366)"/><ellipse cx="367" cy="373" rx="113" ry="86" transform="rotate(-35 367 373)"/><path d="M355 288L358 248Q370 224 382 248L384 280M446 286L490 252Q520 246 516 276L472 316M262 366L226 354Q222 330 244 332L280 342M344 468L346 508Q354 524 372 510L376 466M456 406L490 410Q516 396 494 382L470 378M352 292L364 328M416 280L412 314M472 340L432 344M458 394L422 380M418 440L390 412M344 464L352 420M276 424L314 404M294 332L318 356"/>
      <path d="M610 334Q580 310 572 240L580 206M564 280Q550 250 570 206M562 206Q524 160 532 112Q560 110 574 140M574 206Q550 160 590 124L622 102Q640 160 608 188ZM572 206Q590 160 668 154Q664 210 608 216ZM580 276Q600 240 640 256Q670 280 666 330Q656 400 600 404Q540 400 528 330Q530 290 554 286Q570 286 580 276"/>
      <path d="M840 180Q920 160 950 220L982 390Q976 404 960 408L850 432Q826 436 822 414Q800 340 802 264Q830 270 830 230Q860 220 840 180ZM880 174Q930 170 960 210Q1000 290 1006 370Q1000 390 974 404M894 424L910 480Q930 496 940 474L928 418M844 290L864 298L846 306M918 274L902 286L924 292M866 346Q900 350 922 336M880 350L888 374Q904 388 916 368L912 344M900 346V362"/>
      <path d="M1050 304Q1070 296 1096 316Q1150 270 1220 284Q1262 300 1260 360Q1250 386 1214 400Q1196 410 1202 450Q1206 510 1180 528Q1150 530 1130 484Q1110 456 1060 456Q1030 440 1040 416Q1070 400 1062 360Z"/>
      <path d="M850 484Q878 500 866 528Q850 536 838 520Q836 500 850 484ZM988 480Q1020 500 1020 516Q1010 536 990 532Q980 510 988 480ZM1064 498Q1094 516 1090 530Q1080 552 1066 540Q1056 520 1064 498ZM1380 230Q1410 220 1420 256Q1390 254 1380 230ZM1504 266Q1540 240 1552 270Q1530 284 1504 266"/>
      <path d="M1424 336Q1416 320 1436 302L1444 270Q1452 264 1460 280L1478 306Q1480 318 1500 314Q1520 330 1480 350Q1420 390 1410 370Q1400 350 1424 336ZM1400 400Q1390 380 1440 370Q1500 350 1530 328Q1560 330 1558 370Q1500 420 1420 426Q1394 426 1400 400ZM1390 432Q1370 460 1396 484Q1416 500 1430 480L1460 484L1500 450L1568 430M1424 494L1480 570Q1490 580 1510 576L1568 560"/>
      <path d="M494 500Q490 476 512 468L728 406Q760 400 770 424L818 590Q820 620 784 636L796 686L718 652L580 692Q550 702 538 668Z"/><circle cx="628" cy="554" r="74"/><circle cx="649" cy="534" r="22"/><circle cx="649" cy="534" r="6"/><path d="M580 554Q590 534 612 546M592 588Q640 590 676 562Q680 600 650 614Q620 620 592 588ZM620 586L628 608Q650 620 654 598L650 578M728 608L742 618L760 578M766 610L780 574"/>
      <path d="M0 500Q60 520 66 584L0 604M30 392Q44 386 50 410L56 436L84 424Q98 430 86 442L60 450L66 484Q54 492 48 480L44 454L10 458Q-4 450 10 438L38 434Z"/>
      <circle cx="62" cy="740" r="102"/><path d="M92 738Q60 710 68 694Q86 680 98 700Q116 684 130 696Q130 720 92 738ZM0 740L30 754Q52 720 46 706Q30 700 22 718Q10 704 0 712M34 782L104 764Q100 800 70 800Q46 800 34 782Z"/>
      <path d="M224 680Q224 652 250 650L450 648Q480 650 482 676L484 834Q480 856 460 858L334 860L300 896M224 680L228 840Q230 860 250 860H270V896"/>
      <path d="M656 896Q650 830 672 806Q690 800 700 830Q760 840 768 860Q760 890 740 896M808 834Q780 800 730 800Q690 790 692 774Q720 764 790 800L820 838V880M808 834Q820 730 834 720Q856 720 850 760L860 800Q880 750 900 750Q916 760 906 790L878 848L930 814Q948 820 940 836L856 892M860 800Q862 840 844 866"/>
      <path d="M958 630Q920 604 910 624Q906 670 930 674Q926 740 970 764Q1010 784 1060 774Q1130 760 1140 696Q1140 650 1120 630Q1140 590 1104 568Q1080 570 1070 598Q1000 596 958 630ZM1140 694Q1180 690 1200 690Q1230 670 1220 620Q1194 596 1216 586Q1240 590 1248 630Q1250 670 1240 700Q1260 730 1260 780V850Q1230 864 1180 866Q1160 860 1170 844L1190 838V820M1010 780Q1020 820 1050 830L1056 860Q1030 870 1034 890Q1060 904 1100 900Q1130 880 1120 830V812M1120 832Q1170 830 1200 790L1216 820Q1190 850 1200 860M1076 834L1086 860Q1060 870 1064 894M1030 680Q1040 670 1042 686L1030 692Z"/>
      <circle cx="986" cy="670" r="18"/><circle cx="1068" cy="649" r="18"/><path d="M1004 696Q1016 720 1034 692Q1060 710 1064 680M958 711h3M971 713h3M1098 682h3M1108 672h3"/>
      <path d="M1334 710Q1330 700 1350 694L1490 686L1520 682L1502 710L1510 806Q1510 820 1496 822L1366 836Q1346 836 1344 820ZM1370 736L1470 724Q1480 734 1470 740L1372 752Q1362 744 1370 736ZM1376 772L1446 764Q1458 770 1450 778L1378 788Q1366 780 1376 772Z"/>
      <path d="M1070 990Q1100 1004 1150 990Q1220 990 1222 1050Q1220 1130 1200 1240Q1190 1310 1150 1308Q1090 1310 1084 1260L1070 1210M1392 1030Q1400 1000 1430 1000Q1456 1006 1458 1030L1466 1100Q1464 1130 1436 1134Q1406 1136 1400 1106ZM1362 1106Q1376 1100 1380 1120Q1400 1160 1440 1160Q1490 1150 1490 1080Q1496 1070 1506 1078Q1510 1150 1460 1174L1470 1220Q1460 1240 1450 1226L1440 1176Q1370 1174 1362 1106M1120 1380Q1130 1360 1200 1356Q1260 1270 1300 1266Q1340 1270 1342 1330Q1340 1370 1320 1380"/>
      <path d="M50 1400Q50 1340 80 1326M300 1326Q310 1400 280 1420M80 1370Q80 1340 150 1350L178 1368L120 1326M178 1368L230 1326M178 1368L270 1350Q290 1370 250 1376L178 1368M178 1368L170 1326M178 1368L188 1326M178 1368L140 1420M178 1368L230 1420M470 1366L600 1326M420 1326Q440 1340 470 1326M480 1366Q460 1350 480 1340L560 1326M830 1400L850 1326M880 1326Q900 1350 990 1356Q994 1340 960 1326M990 1356L960 1420M700 1400Q720 1350 760 1340L770 1400"/>
    </g>
    <text class="doodle-text" x="632" y="1566" font-size="44">Hi</text>
    <!-- strip around the composer -->
    <g>
      <path d="M8 1880Q14 1868 20 1876Q28 1862 34 1874Q30 1890 22 1898ZM60 1915L90 1908M120 1920Q124 1912 132 1906M156 1908L170 1920M250 1906L230 1920M620 1920L720 1908M760 1920L770 1908M470 1920Q476 1910 486 1908M926 1880L900 1920M910 1852L950 1908M905 1906L985 1916M912 1854L904 1906M948 1760Q954 1748 978 1752Q994 1768 980 1790L940 1800M1076 1744Q1056 1750 1060 1770Q1050 1786 1080 1790M1048 1892l8 2 4-6h6l4 8 8-2 2 20-8 8h-20l-8-10z"/>
      <circle cx="7" cy="1853" r="5"/><circle cx="8" cy="1912" r="7"/><circle cx="44" cy="1914" r="6"/><circle cx="912" cy="1762" r="4"/><circle cx="1062" cy="1912" r="5"/><circle cx="877" cy="1910" r="5"/><circle cx="1071" cy="1882" r="4"/><circle cx="570" cy="1914" r="5"/><circle cx="706" cy="1912" r="7"/>
    </g>
  </svg>

  <div class="messages">
    <article class="bubble in photo">
      <div class="photo-frame">
        <table class="sheet">
          <tbody>
            <tr><td class="c-no">4</td><td class="c-date">04/10/2019</td><td class="c-code">RKSG</td><td class="c-num">-NA-</td><td><svg width="26" height="22" role="img" aria-label="Edit"><use href="#edit"/></svg></td></tr>
            <tr><td class="c-no">5</td><td class="c-date">04/10/2019</td><td class="c-code">DCSG</td><td class="c-num">1165</td><td><svg width="26" height="22" role="img" aria-label="Edit"><use href="#edit"/></svg></td></tr>
          </tbody>
        </table>
      </div>
      <p class="text block">Give delete button also . This applies to everywhere you are giving edit button.<span class="meta">12:05 pm</span></p>
    </article>

    <article class="bubble in follow">
      <div class="row"><p class="text">And PDF button</p><p class="meta">12:06 pm</p></div>
    </article>

    <article class="bubble out tail">
      <div class="row"><p class="text">Will done</p><p class="meta">2:20 pm <svg class="ticks" width="46" height="30" role="img" aria-label="Delivered"><use href="#ticks"/></svg></p></div>
    </article>

    <p class="date-chip">7 OCTOBER 2019</p>

    <article class="bubble out tail wide quoted">
      <blockquote class="quote">
        <cite>Aman Mittal Sir</cite>
        <p>Calculations look good too <svg class="emoji-small" width="40" height="42" role="img" aria-label="thumbs up"><use href="#thumb"/></svg></p>
        <p>&nbsp;</p>
        <p>For this report, user should be able to se…</p>
      </blockquote>
      <div class="row"><p class="text">Done.</p><p class="meta">5:44 pm <svg class="ticks" width="46" height="30" role="img" aria-label="Delivered"><use href="#ticks"/></svg></p></div>
    </article>

    <article class="bubble in tail">
      <blockquote class="quote mine">
        <cite>You</cite>
        <p>Done.</p>
      </blockquote>
      <div class="row"><p class="text with-emoji"><svg width="60" height="64" role="img" aria-label="thumbs up"><use href="#thumb"/></svg><span>works</span></p><p class="meta">7:58 pm</p></div>
    </article>

    <article class="bubble in follow wide">
      <p class="text block">Loading summary will also have the same option to select date<span class="meta">8:00 pm</span></p>
    </article>
  </div>

  <form class="composer">
    <div class="field">
      <button type="button" class="icon-button" aria-label="Emoji"><svg width="64" height="64" viewBox="0 0 64 64"><circle cx="32" cy="32" r="29.5" fill="none" stroke="#868b93" stroke-width="5"/><ellipse cx="23" cy="25" rx="4.5" ry="5.5" fill="#868b93"/><ellipse cx="41" cy="25" rx="4.5" ry="5.5" fill="#868b93"/><path d="M15 35Q32 40 49 35Q50 51 32 51Q14 51 15 35Z" fill="#868b93"/><path d="M20 39Q32 42 44 39Q42 44 32 44Q22 44 20 39Z" fill="#fff"/></svg></button>
      <span class="caret"></span>
      <input class="input" type="text" placeholder="Type a message" aria-label="Type a message">
      <button type="button" class="icon-button attach" aria-label="Attach"><svg width="64" height="58" viewBox="0 0 64 58" fill="none" stroke="#868b93" stroke-width="5"><path d="M34 6L57 32Q64 42 57 50Q48 58 38 50L6 20Q0 12 6 6Q13 0 21 6L46 32Q50 38 46 42Q42 45 36 41L19 23"/></svg></button>
      <button type="button" class="icon-button" aria-label="Camera"><svg width="60" height="58" viewBox="0 0 60 58"><rect width="60" height="58" rx="15" fill="#868b93"/><circle cx="30" cy="29" r="14" fill="none" stroke="#fff" stroke-width="5"/></svg></button>
    </div>
    <button type="button" class="mic" aria-label="Voice message"><svg width="44" height="62" viewBox="0 0 44 62"><rect x="12" width="20" height="38" rx="10" fill="#fff"/><path d="M3 29Q4 47 22 47Q40 47 41 29M22 47V61" fill="none" stroke="#fff" stroke-width="5.5" stroke-linecap="round"/></svg></button>
  </form>
</main>
</body>
</html>
```
FILE: styles.css
```
* {
  box-sizing: border-box;
}

body {
  margin: 0;
  min-height: 100vh;
  display: flex;
  flex-direction: column;
  font-family: Roboto, "Noto Sans", sans-serif;
  color: #000;
  background: #eee6dd;
}

p,
h1,
blockquote {
  margin: 0;
}

button {
  padding: 0;
  border: 0;
  background: none;
}

svg {
  display: block;
  flex: none;
}

.defs {
  position: absolute;
  width: 0;
  height: 0;
}

/* Status bar */
.status-bar {
  height: 72px;
  padding: 0 16px 0 18px;
  display: flex;
  align-items: center;
  justify-content: space-between;
  background: #054d44;
  color: #e6eeec;
}

.clock {
  font-size: 32px;
  font-weight: 500;
}

.status-icons {
  display: flex;
  align-items: center;
  gap: 8px;
  font-size: 30px;
  font-weight: 700;
}

.status-icons > svg {
  margin-right: 6px;
}

.status-icons > .signal {
  margin-right: -1px;
}

.status-icons > .data {
  align-self: flex-end;
  margin: 0 2px 4px -8px;
}

.battery {
  width: 66px;
  height: 30px;
  border: 3px solid #e6eeec;
  border-radius: 15px;
  background: linear-gradient(#487d75, #487d75) 17px 3px / 38px 18px no-repeat;
  font-size: 26px;
  font-weight: 500;
  line-height: 25px;
  text-align: center;
}

/* App bar */
.app-bar {
  position: relative;
  z-index: 1;
  height: 168px;
  padding: 0 60px 0 24px;
  display: flex;
  align-items: center;
  background: #075e55;
  box-shadow: 0 4px 12px rgba(0, 0, 0, 0.4);
}

.avatar {
  margin: 0 23px 0 10px;
}

.seal-en {
  font: 700 12px Roboto, sans-serif;
  fill: #fff;
}

.seal-hi {
  font: 700 14px "Noto Sans", "Noto Sans Devanagari", sans-serif;
  fill: #fff;
}

.title {
  flex: 1;
  padding-bottom: 2px;
  color: #fff;
  font-size: 54px;
  font-weight: 500;
}

.call {
  margin: 0 93px 0 86px;
}

/* Chat area */
.chat {
  position: relative;
  flex: 1;
  display: flex;
  flex-direction: column;
  justify-content: space-between;
  overflow: hidden;
  background: linear-gradient(#ecebe5, #edebe6 200px, #eee6dd 440px);
}

.wallpaper {
  position: absolute;
  inset: 0;
  width: 100%;
  height: 100%;
  fill: none;
  stroke: #dbd8d0;
  stroke-width: 2;
  stroke-linejoin: round;
  stroke-linecap: round;
}

.wallpaper *,
.doodles path {
  vector-effect: non-scaling-stroke;
}

.doodle-text {
  font-family: Roboto, sans-serif;
  font-weight: 500;
}

.messages {
  position: relative;
  padding: 0 52px;
  display: flex;
  flex-direction: column;
  align-items: flex-start;
}

.bubble {
  position: relative;
  max-width: 856px;
  margin-top: 25px;
  border-radius: 18px;
  filter: drop-shadow(0 2px 1px rgba(0, 0, 0, 0.16));
}

.in {
  background: #fff;
}

.out {
  align-self: flex-end;
  background: #e1ffc7;
}

.follow {
  margin-top: 8px;
}

.wide {
  width: 100%;
}

.in.tail {
  border-top-left-radius: 0;
}

.out.tail {
  border-top-right-radius: 0;
}

.tail::before {
  content: "";
  position: absolute;
  top: 0;
  width: 22px;
  height: 35px;
  background: inherit;
}

.in.tail::before {
  right: 100%;
  clip-path: polygon(4px 0, 100% 0, 100% 100%, 1px 7px, 0 3px);
}

.out.tail::before {
  left: 100%;
  clip-path: polygon(0 0, 18px 0, 22px 3px, 21px 7px, 0 100%);
}

.text {
  font-size: 48px;
  line-height: 57px;
}

.meta {
  display: flex;
  align-items: center;
  gap: 12px;
  color: #9a9a9a;
  font-size: 36px;
  line-height: 42px;
  white-space: nowrap;
}

.out .meta {
  color: #8a9f7c;
}

.row {
  display: flex;
  align-items: flex-end;
  justify-content: space-between;
  gap: 40px;
  padding: 14px 19px 12px 24px;
}

.out .row {
  gap: 22px;
  padding-right: 21px;
}

.row .text {
  margin-bottom: 7px;
}

.block {
  display: flow-root;
  padding: 13px 19px 10px 24px;
}

.block .meta {
  float: right;
  margin-top: 21px;
}

/* Photo message */
.photo {
  width: 100%;
  max-width: 777px;
  margin-top: 0;
  border-radius: 0 0 18px 18px;
}

.photo-frame {
  height: 158px;
  margin: 0 12px;
  padding: 0 54px;
  border: solid #d9d9d9;
  border-width: 0 1px 1px;
  border-radius: 0 0 10px 10px;
  background: #eaeaea;
  overflow: hidden;
}

.sheet {
  width: 100%;
  height: 157px;
  border-collapse: collapse;
  table-layout: fixed;
  background: #fff;
  box-shadow: 0 0 8px 2px rgba(0, 0, 0, 0.3);
  color: #4a4a4a;
  font-family: Lato, sans-serif;
  font-size: 24px;
  text-align: center;
}

.sheet td {
  height: 78px;
  padding: 6px 0 0 2px;
}

.sheet tr:last-child td {
  height: 79px;
  padding: 0 0 2px 2px;
}

.sheet svg {
  margin: 0 0 0 46px;
}

.c-no {
  width: 107px;
}

.c-date {
  width: 196px;
}

.c-code {
  width: 124px;
}

.c-num {
  width: 104px;
}

.photo .block {
  padding: 16px 13px 10px 24px;
  color: #222;
}

.photo .meta {
  margin-top: 19px;
}

/* Date divider */
.date-chip {
  align-self: center;
  margin: 30px 0 13px;
  padding: 22px 22px 18px;
  border-radius: 18px;
  background: #d4eaf4;
  box-shadow: 0 2px 2px rgba(0, 0, 0, 0.2);
  color: #5b676d;
  font-size: 39px;
  line-height: 45px;
}

/* Quoted replies */
.bubble:has(.quote) {
  padding-top: 12px;
}

.quote {
  margin: 0 12px;
  padding: 19px 12px 15px 24px;
  border: 1px solid #cbe6b4;
  border-left: 9px solid #8e388e;
  border-radius: 9px;
  background: #d9f6c1;
  color: #65785b;
  font-size: 42px;
  line-height: 48px;
}

.quote cite {
  display: block;
  margin-bottom: 9px;
  color: #8e388e;
  font-style: normal;
  font-weight: 500;
}

.quote p {
  overflow: hidden;
  white-space: nowrap;
  text-overflow: ellipsis;
}

.emoji-small {
  display: inline-block;
  vertical-align: -7px;
}

.mine {
  padding: 20px 24px 16px;
  border-color: #e6e6e6;
  border-left-color: #00897b;
  background: #f7f7f7;
  color: #747474;
}

.mine cite {
  margin-bottom: 10px;
  color: #00897b;
}

.quoted .row {
  padding-top: 12px;
}

.quoted .text {
  margin-bottom: 5px;
}

.row .with-emoji {
  display: flex;
  align-items: center;
  gap: 20px;
  margin: 8px 0 13px 3px;
}

/* Composer */
.composer {
  position: relative;
  display: flex;
  align-items: center;
  gap: 15px;
  padding: 0 13px 13px 15px;
}

.field {
  flex: 1;
  min-width: 0;
  height: 136px;
  padding: 0 39px 0 32px;
  display: flex;
  align-items: center;
  border-radius: 68px;
  background: #fff;
  box-shadow: 0 2px 2px rgba(0, 0, 0, 0.22);
}

.caret {
  width: 6px;
  height: 73px;
  margin-left: 33px;
  background: #00897b;
}

.input {
  flex: 1;
  min-width: 0;
  margin-left: -6px;
  padding: 2px 0 0;
  border: 0;
  outline: 0;
  background: none;
  font: 54px Roboto, sans-serif;
}

.input::placeholder {
  color: #ccc;
  opacity: 1;
}

.attach {
  margin-right: 71px;
}

.mic {
  width: 141px;
  height: 141px;
  display: grid;
  place-items: center;
  border-radius: 50%;
  background: #00897b;
  box-shadow: 0 3px 6px rgba(0, 0, 0, 0.3);
}
```
